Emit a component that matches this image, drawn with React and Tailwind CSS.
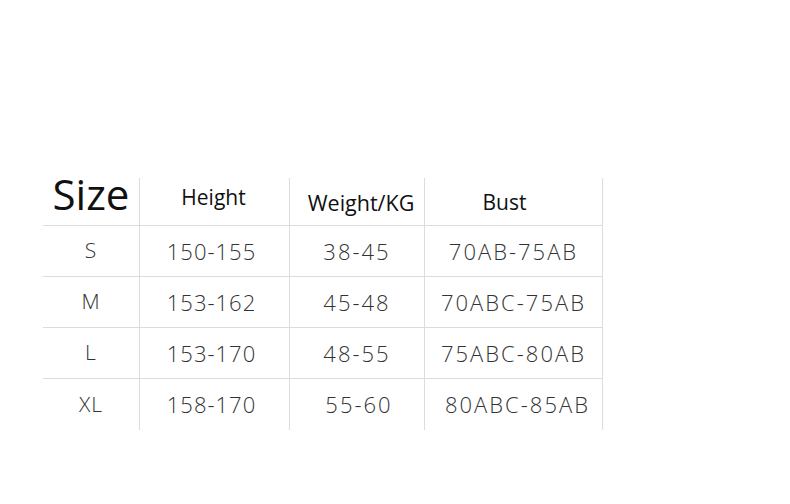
const rows = [
  ['S', '150-155', '38-45', '70AB-75AB'],
  ['M', '153-162', '45-48', '70ABC-75AB'],
  ['L', '153-170', '48-55', '75ABC-80AB'],
  ['XL', '158-170', '55-60', '80ABC-85AB'],
]

export default function App() {
  return (
    <div className="w-[790px] h-[504px] bg-white pt-[178px] pl-[43px]" style={{ fontFamily: '"Open Sans", "Noto Sans", sans-serif' }}>
      <div className="grid grid-cols-[96px_150px_135px_179px] w-[562px]">
        {/* Header */}
        <div className="h-[48px] border-b border-[#dcdcdc] flex justify-center">
          <span className="text-[42px] leading-none text-[#111] -mt-[5px]">Size</span>
        </div>
        <div className="h-[48px] border-b border-l border-[#dcdcdc] flex justify-center pt-[4px] pr-[2px]">
          <span className="text-[21px] text-[#111]">Height</span>
        </div>
        <div className="h-[48px] border-b border-l border-[#dcdcdc] flex justify-center pt-[9px] pl-[8px]">
          <span className="text-[21.5px] text-[#111]">Weight/KG</span>
        </div>
        <div className="h-[48px] border-b border-l border-r border-[#dcdcdc] flex justify-center pt-[9px] pr-[18px]">
          <span className="text-[21px] text-[#111]">Bust</span>
        </div>

        {/* Body */}
        {rows.map((r, i) => (
          <Row key={r[0]} cells={r} last={i === rows.length - 1} />
        ))}
      </div>
    </div>
  )
}

function Row({ cells, last }) {
  const b = last ? '' : 'border-b'
  return (
    <>
      <div className={`h-[51px] ${b} border-[#dcdcdc] flex items-center justify-center text-[21px] font-light text-[#333] tracking-[1px]`}>
        {cells[0]}
      </div>
      <div className={`h-[51px] ${b} border-l border-[#dcdcdc] flex items-center justify-center pr-[6px] text-[22px] font-light text-[#333] tracking-[1px]`}>
        {cells[1]}
      </div>
      <div className={`h-[51px] ${b} border-l border-[#dcdcdc] flex items-center justify-center text-[22px] font-light text-[#333] tracking-[2px] ${last ? 'pl-[4px]' : ''}`}>
        {cells[2]}
      </div>
      <div className={`h-[51px] ${b} border-l border-r border-[#dcdcdc] flex items-center justify-center text-[22px] font-light text-[#333] tracking-[2px] ${last ? 'pl-[8px]' : ''}`}>
        {cells[3]}
      </div>
    </>
  )
}
